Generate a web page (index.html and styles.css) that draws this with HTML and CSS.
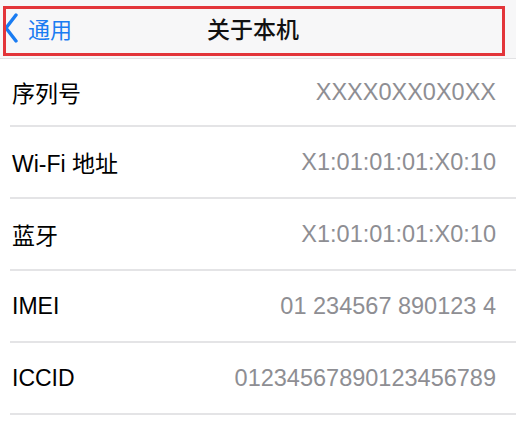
FILE: index.html
```html
<!DOCTYPE html>
<html lang="zh-CN">
<head>
    <meta charset="UTF-8">
    <meta name="viewport" content="width=device-width, initial-scale=1.0">
    <title>关于本机</title>
    <link rel="stylesheet" href="styles.css">
</head>
<body>
    <div class="nav">
        <a class="back" href="#">
            <svg class="chevron" width="16" height="30" viewBox="0 0 16 30">
                <path d="M13 2 L3 15 L13 28" fill="none" stroke="#1a7cf2" stroke-width="3.4" stroke-linecap="round" stroke-linejoin="round"/>
            </svg>
            <span>通用</span>
        </a>
        <div class="title">关于本机</div>
        <div></div>
        <div class="highlight"></div>
    </div>

    <ul class="list">
        <li class="row first"><span class="label">序列号</span><span class="value">XXXX0XX0X0XX</span></li>
        <li class="row"><span class="label">Wi-Fi 地址</span><span class="value">X1:01:01:01:X0:10</span></li>
        <li class="row"><span class="label">蓝牙</span><span class="value">X1:01:01:01:X0:10</span></li>
        <li class="row"><span class="label">IMEI</span><span class="value">01 234567 890123 4</span></li>
        <li class="row"><span class="label">ICCID</span><span class="value">01234567890123456789</span></li>
    </ul>
</body>
</html>
```

FILE: styles.css
```css
body {
    margin: 0;
    background-color: #fff;
    font-family: 'Liberation Sans', 'Noto Sans CJK SC', sans-serif;
    color: #000;
}
.nav {
    position: relative;
    height: 56px;
    background-color: #f7f7f8;
    border-bottom: 1px solid #e2e2e4;
    display: grid;
    grid-template-columns: 1fr auto 1fr;
    align-items: center;
    padding: 0 10px 2px 0;
}
.back {
    display: flex;
    align-items: center;
    gap: 9px;
    padding-left: 3px;
    color: #1a7cf2;
    text-decoration: none;
    font-size: 22px;
}
.chevron {
    display: block;
}
.title {
    font-family: 'Noto Sans CJK SC', sans-serif;
    font-size: 23px;
    font-weight: 500;
    color: #111;
}
.highlight {
    position: absolute;
    left: 3px;
    top: 6px;
    width: 496px;
    height: 44px;
    border: 3px solid #e3353a;
}
.list {
    list-style: none;
    margin: 0;
    padding: 0;
}
.row {
    display: flex;
    justify-content: space-between;
    align-items: center;
    height: 70px;
    margin-left: 10px;
    padding: 0 20px 0 2px;
    border-bottom: 2px solid #e4e4e6;
    font-size: 23px;
}
.row.first {
    height: 66px;
}
.value {
    color: #8e8e93;
    font-size: 23.5px;
}
```
